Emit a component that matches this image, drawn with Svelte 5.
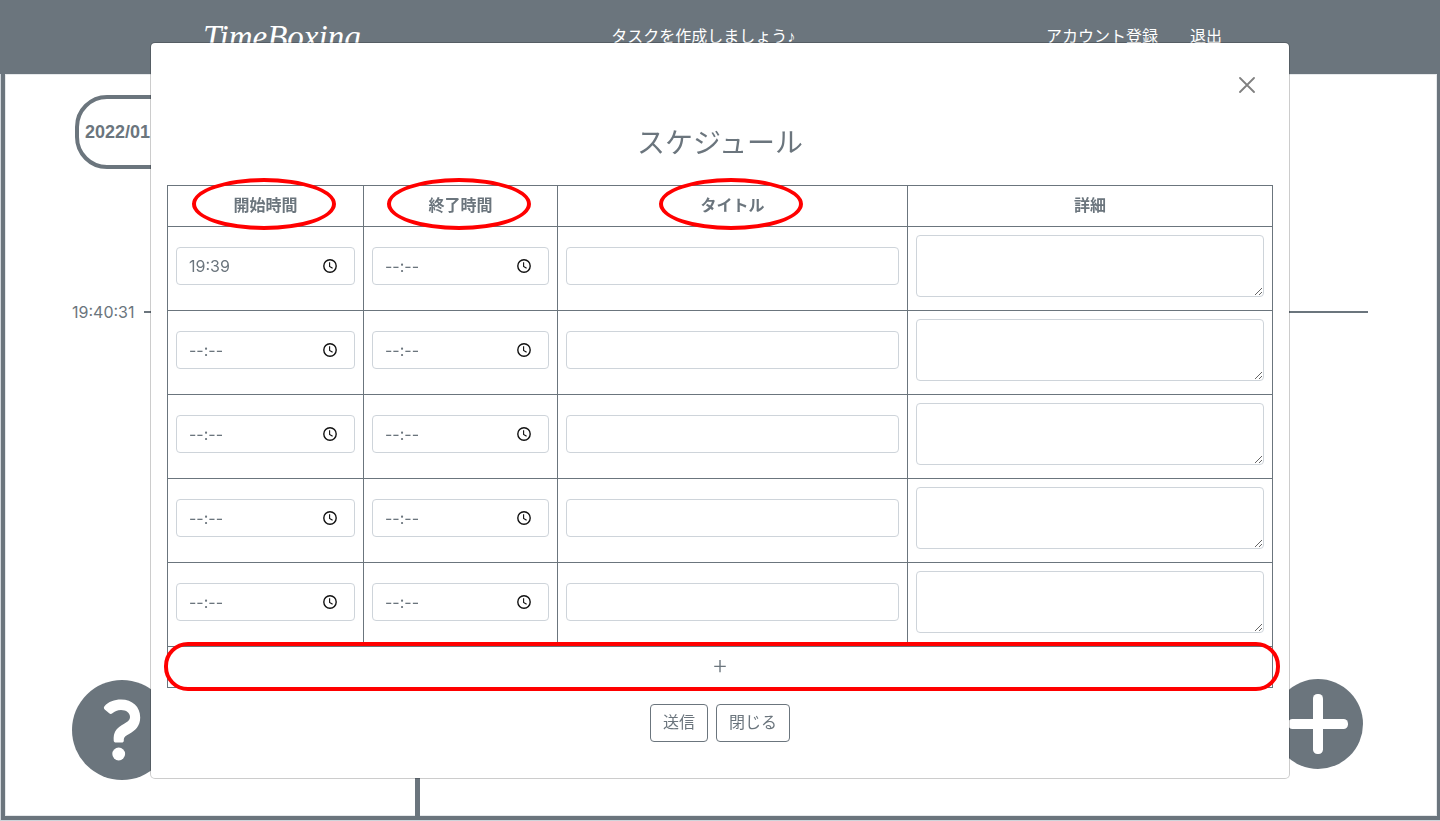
<script>
  let rows = $state([
    { start: '19:39', end: '', title: '', detail: '' },
    { start: '', end: '', title: '', detail: '' },
    { start: '', end: '', title: '', detail: '' },
    { start: '', end: '', title: '', detail: '' },
    { start: '', end: '', title: '', detail: '' }
  ]);

  let open = $state(true);

  function addRow() {
    rows.push({ start: '', end: '', title: '', detail: '' });
  }

  function close() {
    open = false;
  }
</script>

{#snippet clock()}
  <svg viewBox="0 0 16 16" width="16" height="16" aria-hidden="true">
    <circle cx="8" cy="8" r="6.2" fill="none" stroke="#111" stroke-width="1.4" />
    <path d="M7.6 4.3v4.1l3 1.9" fill="none" stroke="#111" stroke-width="1.1" />
  </svg>
{/snippet}

<div class="page">
  <header class="topbar">
    <a class="logo" href="#top">TimeBoxing</a>
    <p class="message">タスクを作成しましょう♪</p>
    <nav class="links">
      <a href="#signup">アカウント登録</a>
      <a href="#leave">退出</a>
    </nav>
  </header>

  <main class="board">
    <section class="side">
      <div class="date">2022/01</div>
    </section>
    <section class="timeline"></section>
    <div class="now">
      <span>19:40:31</span>
      <i class="rule"></i>
    </div>
    <button class="round help" type="button" aria-label="help">
      <svg viewBox="0 0 100 100" aria-hidden="true">
        <path
          fill="#fff"
          d="M32.5 26.3C36.5 21.8 42.2 19.6 49 19.6C60.5 19.6 68.2 27 68.2 37.5C68.2 46 63.2 50.6 57.5 53.8C53.5 56 51.8 57.2 51.8 59.500V60.8C51.800 62 51 62.600 49.700 62.600H44C42.600 62.600 41.800 62 41.700 60.500C41.300 53 43.500 49 49.600 45.200C54.500 42.200 58 40.500 58 36.900C58 32.700 54.200 29.900 49 29.900C45.300 29.900 42.700 31.200 40.400 33.200C39.400 34.100 38.200 34.200 37.200 33.300L32.700 29.500C31.700 28.500 31.600 27.300 32.500 26.300Z"
        />
        <circle cx="46.7" cy="74" r="6.4" fill="#fff" />
      </svg>
    </button>
    <button class="round add" type="button" aria-label="add">
      <svg viewBox="0 0 90 90" aria-hidden="true">
        <rect x="40" y="15" width="10" height="60" rx="4.5" fill="#fff" />
        <rect x="15" y="40" width="60" height="10" rx="4.5" fill="#fff" />
      </svg>
    </button>
  </main>
</div>

{#if open}
  <div class="overlay">
    <div class="modal" role="dialog" aria-labelledby="modal-title">
      <div class="modal-head">
        <button class="close" type="button" aria-label="close" onclick={close}>
          <svg viewBox="0 0 16 16" width="16" height="16" aria-hidden="true">
            <path d="M1 1l14 14M15 1L1 15" stroke="#808080" stroke-width="1.8" stroke-linecap="round" />
          </svg>
        </button>
      </div>
      <form class="modal-body" onsubmit={(e) => e.preventDefault()}>
        <h3 id="modal-title">スケジュール</h3>
        <table>
          <colgroup>
            <col class="c-start" />
            <col class="c-end" />
            <col class="c-title" />
            <col />
          </colgroup>
          <thead>
            <tr>
              <th class="marked">開始時間</th>
              <th class="marked">終了時間</th>
              <th class="marked">タイトル</th>
              <th>詳細</th>
            </tr>
          </thead>
          <tbody>
            {#each rows as row}
              <tr>
                <td>
                  <label class="time">
                    <input aria-label="開始時間" placeholder="--:--" bind:value={row.start} />
                    {@render clock()}
                  </label>
                </td>
                <td>
                  <label class="time">
                    <input aria-label="終了時間" placeholder="--:--" bind:value={row.end} />
                    {@render clock()}
                  </label>
                </td>
                <td><input aria-label="タイトル" bind:value={row.title} /></td>
                <td><textarea aria-label="詳細" rows="2" bind:value={row.detail}></textarea></td>
              </tr>
            {/each}
            <tr>
              <td class="more" colspan="4">
                <button type="button" onclick={addRow}>＋</button>
              </td>
            </tr>
          </tbody>
        </table>
        <div class="actions">
          <button type="submit">送信</button>
          <button type="button" onclick={close}>閉じる</button>
        </div>
      </form>
    </div>
  </div>
{/if}

<style>
  :global(body) {
    margin: 0;
    color: #6b757d;
    background: #fff;
    font: 16px/24px "Liberation Sans", "Noto Sans CJK JP", sans-serif;
  }

  *,
  *::after {
    box-sizing: border-box;
  }

  button,
  input,
  textarea {
    font: inherit;
    color: inherit;
  }

  button {
    cursor: pointer;
  }

  .page {
    display: flex;
    flex-direction: column;
    min-height: 100vh;
  }

  .topbar {
    position: relative;
    z-index: 1;
    display: flex;
    justify-content: space-between;
    align-items: center;
    height: 74px;
    padding: 0 218px 0 203px;
    background: #6b757d;
    color: #fff;
  }

  .topbar a {
    color: inherit;
    text-decoration: none;
  }

  .topbar .logo {
    font: italic 33px/40px "Liberation Serif", serif;
  }

  .message {
    margin: 0;
  }

  .links {
    display: flex;
    gap: 32px;
  }

  .board {
    position: relative;
    display: flex;
    flex: 1;
    margin: 0 0 1px 1px;
    border: solid #6b757d;
    border-width: 0 3px 4px 4px;
    box-shadow:
      0 0 0 1px #ced4da,
      inset 0 0 0 1px #e6e9eb;
  }

  .side {
    flex: 0 0 29%;
    padding: 21px 0 0 70px;
    border-right: 5px solid #6b757d;
  }

  .timeline {
    flex: 1;
  }

  .date {
    display: flex;
    align-items: center;
    height: 74px;
    padding: 0 6px;
    border: 4px solid #6b757d;
    border-radius: 32px;
    font-weight: 700;
    font-size: 18px;
  }

  .now {
    position: absolute;
    top: 226px;
    left: 67px;
    right: 69px;
    display: flex;
    align-items: center;
    gap: 10px;
  }

  .rule {
    flex: 1;
    height: 2px;
    background: #6b757d;
  }

  .round {
    position: absolute;
    padding: 0;
    border: 0;
    border-radius: 50%;
    background: #6b757d;
  }

  .round svg {
    display: block;
    width: 100%;
  }

  .help {
    left: 67px;
    bottom: 36px;
    width: 100px;
    height: 100px;
  }

  .add {
    right: 74px;
    bottom: 47px;
    width: 90px;
    height: 90px;
  }

  .overlay {
    position: fixed;
    z-index: 2;
    inset: 0;
    overflow: auto;
    padding: 42px 16px;
  }

  .modal {
    max-width: 1140px;
    margin: 0 auto;
    border: 1px solid rgba(0, 0, 0, 0.2);
    border-radius: 5px;
    background: #fff;
    background-clip: padding-box;
  }

  .modal-head {
    display: flex;
    justify-content: flex-end;
    padding: 30px 30px 0;
  }

  .close {
    display: grid;
    place-items: center;
    width: 24px;
    height: 24px;
    padding: 0;
    border: 0;
    background: none;
  }

  .modal-body {
    padding: 30px 16px 36px;
  }

  h3 {
    margin: 0 0 24px;
    font-weight: 400;
    font-size: 28px;
    line-height: 34px;
    text-align: center;
  }

  table {
    width: 100%;
    table-layout: fixed;
    border-collapse: collapse;
  }

  .c-start {
    width: 196px;
  }

  .c-end {
    width: 194px;
  }

  .c-title {
    width: 350px;
  }

  th,
  td {
    border: 1px solid #6b757d;
  }

  th {
    padding: 8px;
  }

  td {
    padding: 8px 8px 13px;
  }

  .marked,
  .more {
    position: relative;
  }

  .marked::after,
  .more::after {
    content: "";
    position: absolute;
    border: 4px solid #f00;
    pointer-events: none;
  }

  .marked::after {
    inset: -8px 4px auto 0;
    width: 144px;
    height: 52px;
    margin: 0 auto;
    border-radius: 50%;
  }

  .more::after {
    inset: -5px -8px -4px -4px;
    border-radius: 24px;
  }

  .time {
    position: relative;
    display: block;
  }

  .time svg {
    position: absolute;
    top: 11px;
    right: 17px;
  }

  input,
  textarea {
    display: block;
    width: 100%;
    height: 38px;
    padding: 6px 12px;
    border: 1px solid #ced4da;
    border-radius: 4px;
    background: #fff;
  }

  .time input,
  .now {
    font-family: Inter, sans-serif;
  }

  input::placeholder {
    color: inherit;
    opacity: 1;
  }

  textarea {
    height: 62px;
    resize: vertical;
  }

  .more {
    padding: 8px;
  }

  .more button {
    display: block;
    width: 100%;
    padding: 0;
    border: 0;
    background: none;
    font-weight: 500;
  }

  .actions {
    display: flex;
    justify-content: center;
    gap: 8px;
    margin-top: 16px;
  }

  .actions button {
    padding: 6px 12px;
    border: 1px solid #6b757d;
    border-radius: 4px;
    background: #fff;
  }
</style>
